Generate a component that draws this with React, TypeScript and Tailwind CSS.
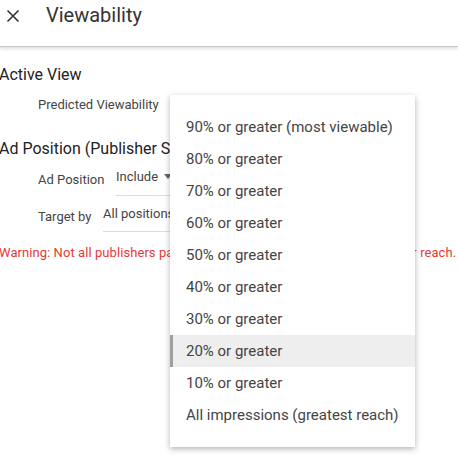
import React from "react";

const options = [
  "90% or greater (most viewable)",
  "80% or greater",
  "70% or greater",
  "60% or greater",
  "50% or greater",
  "40% or greater",
  "30% or greater",
  "20% or greater",
  "10% or greater",
  "All impressions (greatest reach)",
];

const App: React.FC = () => {
  const selected = "20% or greater";

  return (
    <div className="relative h-[455px] w-[458px] overflow-hidden bg-white font-['Roboto',sans-serif]">
      {/* Header */}
      <div className="flex h-[47px] items-start border-b border-[#c8c8c8] pt-[5px] shadow-[0_2px_3px_rgba(0,0,0,0.12)]">
        <button className="ml-[6px] mt-[4px] flex h-[14px] w-[14px] items-center justify-center text-[#333]">
          <svg width="14" height="14" viewBox="0 0 14 14" fill="none" stroke="currentColor" strokeWidth="1.6">
            <path d="M1.5 1.5 L12.5 12.5 M12.5 1.5 L1.5 12.5" />
          </svg>
        </button>
        <h1 className="ml-[26px] text-[20px] leading-none text-[#333]">Viewability</h1>
      </div>

      {/* Body */}
      <div className="-ml-[1px] pt-[18px]">
        <h2 className="text-[16px] leading-[20px] text-[#222]">Active View</h2>
        <div className="mt-[12px] pl-[39px] text-[13px] leading-[16px] text-[#444]">Predicted Viewability</div>

        <h2 className="mt-[26px] whitespace-nowrap text-[16px] leading-[20px] text-[#222]">
          Ad Position (Publisher Selected)
        </h2>

        <div className="mt-[8px] flex items-start pl-[39px] text-[13px] text-[#444]">
          <span className="mt-[3px] w-[78px]">Ad Position</span>
          <div className="flex w-[60px] items-center gap-[6px] border-b border-[#ddd] pb-[8px]">
            <span>Include</span>
            <svg width="8" height="5" viewBox="0 0 8 5" className="fill-[#666]">
              <path d="M0 0 L8 0 L4 5 Z" />
            </svg>
          </div>
        </div>

        <div className="mt-[8px] flex items-start pl-[39px] text-[13px] text-[#444]">
          <span className="mt-[3px] w-[65px]">Target by</span>
          <div className="w-[120px] whitespace-nowrap border-b border-[#ddd] pb-[8px]">All positions</div>
        </div>

        <p className="mt-[11px] whitespace-nowrap text-[13px] tracking-[0.07px] text-[#e53935]">
          Warning: Not all publishers participate in targeting, which may limit your reach.
        </p>
      </div>

      {/* Dropdown menu */}
      <div className="absolute left-[170px] top-[95px] w-[245px] bg-white py-[16px] shadow-[0_2px_6px_rgba(0,0,0,0.3)]">
        {options.map((opt) => (
          <div
            key={opt}
            className={`flex h-[32px] items-center whitespace-nowrap text-[15px] text-[#444] ${
              opt === selected ? "border-l-[3px] border-[#9e9e9e] bg-[#eeeeee] pl-[13px]" : "pl-[16px]"
            }`}
          >
            {opt}
          </div>
        ))}
      </div>
    </div>
  );
};

export default App;
